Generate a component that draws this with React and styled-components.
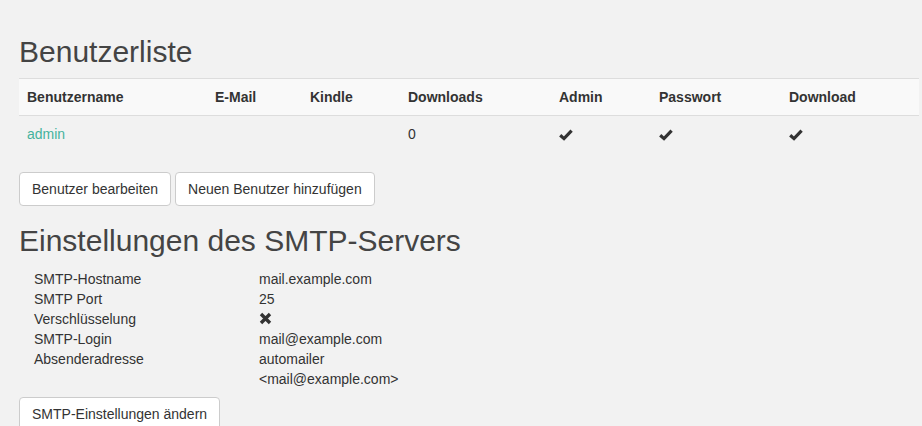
import React from "react"
import styled, { createGlobalStyle } from "styled-components"

const GlobalStyle = createGlobalStyle`
	body {
		margin: 0;
		background: #f2f2f2;
		font-family: "Liberation Sans", Arial, sans-serif;
		font-size: 14px;
		line-height: 20px;
		color: #333;
	}
`

const Page = styled.div`
	padding: 0 3px 0 19px;
`

const Heading = styled.h2`
	font-family: "Liberation Sans", Arial, sans-serif;
	font-weight: 400;
	font-size: 30px;
	line-height: 33px;
	color: #444;
	margin: ${props => props.$top}px 0 10px 0;
`

const Table = styled.table`
	width: 900px;
	table-layout: fixed;
	border-collapse: collapse;
	margin-bottom: 20px;

	th {
		text-align: left;
		font-weight: 700;
		padding: 8px;
		background: #f9f9f9;
		border-top: 1px solid #ddd;
		border-bottom: 1px solid #ddd;
		color: #333;
	}

	td {
		padding: 8px;
		height: 20px;
	}

	a {
		color: #45b29d;
		text-decoration: none;
	}
`

const ButtonRow = styled.div`
	display: flex;
	gap: 4px;
`

const Button = styled.button`
	font-family: "Liberation Sans", Arial, sans-serif;
	font-size: 14px;
	line-height: 20px;
	color: #333;
	background: #fff;
	border: 1px solid #ccc;
	border-radius: 4px;
	padding: 6px 12px;
	height: 34px;
	cursor: pointer;
`

const SettingsList = styled.div`
	padding: 2px 0 0 15px;
	margin-bottom: 8px;
`

const SettingRow = styled.div`
	display: grid;
	grid-template-columns: 225px 1fr;
	line-height: 20px;
`

const Icon = styled.svg`
	display: block;
	margin-top: ${props => props.$top || 0}px;
`

const Check = () => (
	<Icon width="14" height="14" viewBox="0 0 14 14" $top={2}>
		<polyline points="1.2,7.2 5,10.6 12.6,2.6" fill="none" stroke="#333" strokeWidth="3.2" />
	</Icon>
)

const Cross = () => (
	<Icon width="13" height="13" viewBox="0 0 13 13" $top={3}>
		<path d="M2 2 L11 11 M11 2 L2 11" stroke="#333" strokeWidth="3.4" />
	</Icon>
)

const columns = [
	["Benutzername", 188],
	["E-Mail", 95],
	["Kindle", 98],
	["Downloads", 151],
	["Admin", 100],
	["Passwort", 130],
	["Download", 138],
]

const settings = [
	["SMTP-Hostname", "mail.example.com"],
	["SMTP Port", "25"],
	["Verschlüsselung", <Cross />],
	["SMTP-Login", "mail@example.com"],
	["Absenderadresse", <>automailer<br />&lt;mail@example.com&gt;</>],
]

const App = () => {
	return (
		<Page>
			<GlobalStyle />
			<Heading $top={35}>Benutzerliste</Heading>

			<Table>
				<colgroup>
					{columns.map(([name, w]) => (
						<col key={name} style={{ width: w }} />
					))}
				</colgroup>
				<thead>
					<tr>
						{columns.map(([name]) => (
							<th key={name}>{name}</th>
						))}
					</tr>
				</thead>
				<tbody>
					<tr>
						<td><a href="#">admin</a></td>
						<td></td>
						<td></td>
						<td>0</td>
						<td><Check /></td>
						<td><Check /></td>
						<td><Check /></td>
					</tr>
				</tbody>
			</Table>

			<ButtonRow>
				<Button>Benutzer bearbeiten</Button>
				<Button>Neuen Benutzer hinzufügen</Button>
			</ButtonRow>

			<Heading $top={18}>Einstellungen des SMTP-Servers</Heading>

			<SettingsList>
				{settings.map(([label, value]) => (
					<SettingRow key={label}>
						<div>{label}</div>
						<div>{value}</div>
					</SettingRow>
				))}
			</SettingsList>

			<Button>SMTP-Einstellungen ändern</Button>
		</Page>
	)
}

export default App
